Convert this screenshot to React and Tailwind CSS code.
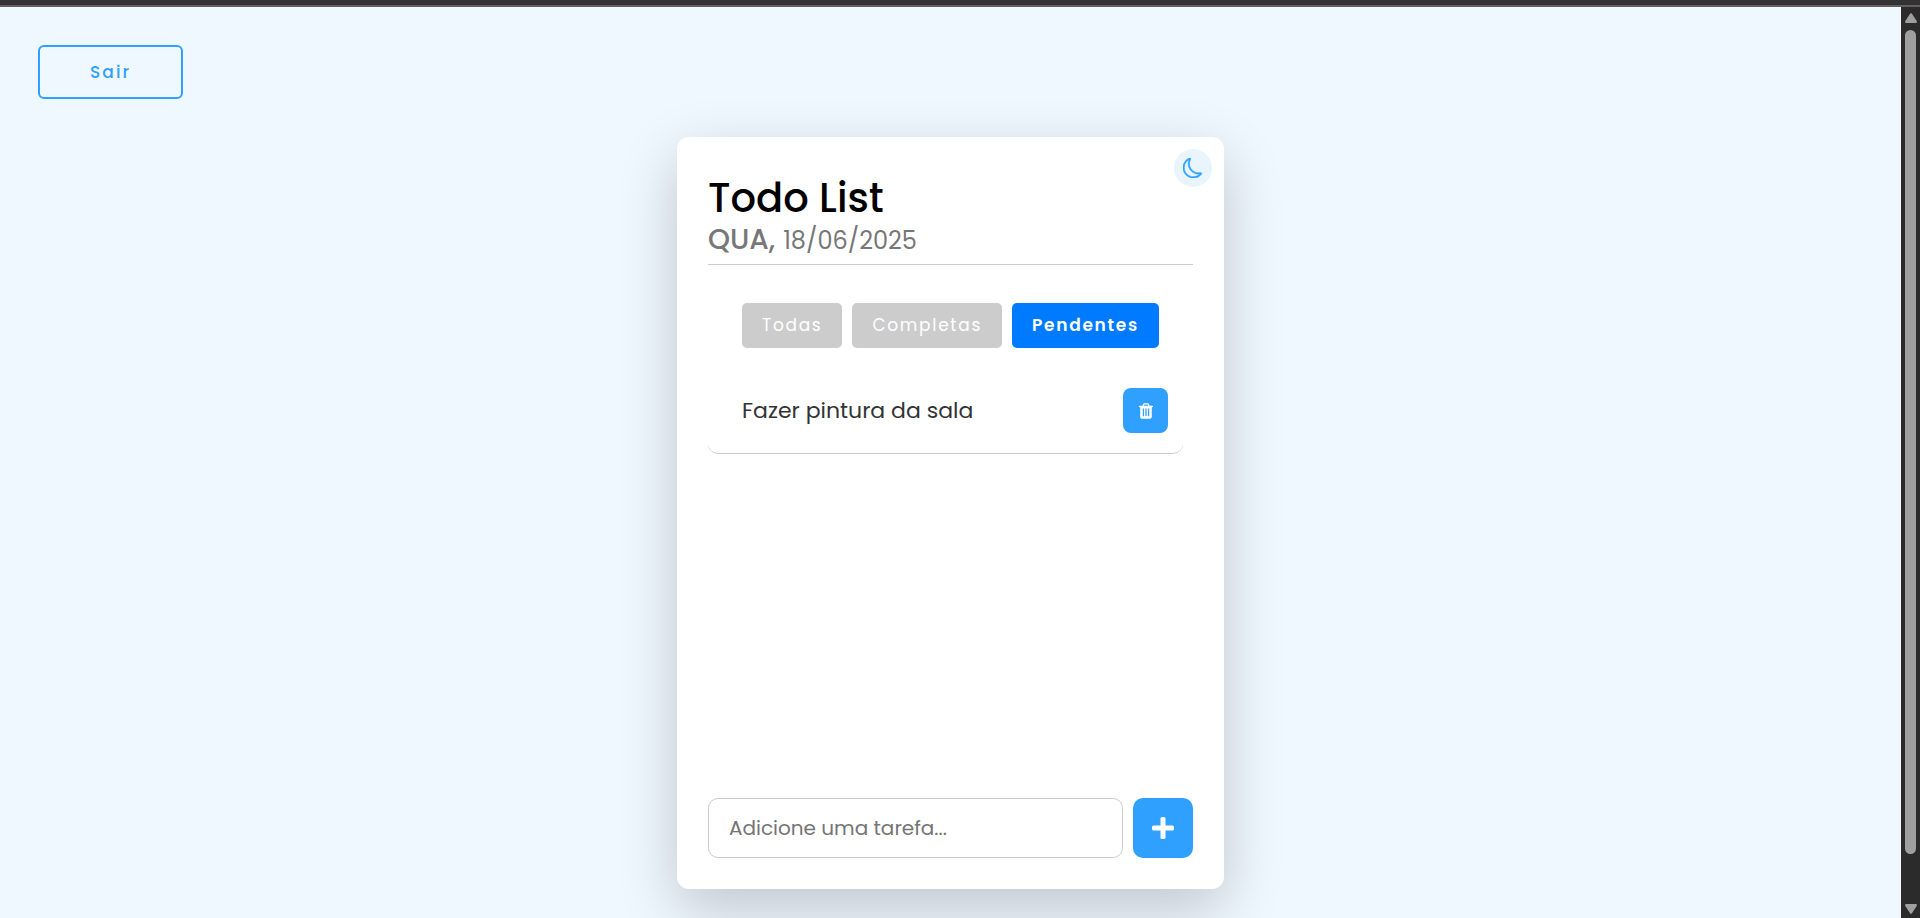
import { useState } from "react";
import { BsMoon } from "react-icons/bs";

const FILTERS = ["Todas", "Completas", "Pendentes"];

function TrashIcon() {
  return (
    <svg viewBox="0 0 1792 1792" className="size-[18px]" fill="currentColor" aria-hidden="true">
      <path d="M704 1376v-704q0-14-9-23t-23-9h-64q-14 0-23 9t-9 23v704q0 14 9 23t23 9h64q14 0 23-9t9-23zm256 0v-704q0-14-9-23t-23-9h-64q-14 0-23 9t-9 23v704q0 14 9 23t23 9h64q14 0 23-9t9-23zm256 0v-704q0-14-9-23t-23-9h-64q-14 0-23 9t-9 23v704q0 14 9 23t23 9h64q14 0 23-9t9-23zm-544-992h448l-48-117q-7-9-17-11h-317q-10 2-17 11zm928 32v64q0 14-9 23t-23 9h-96v948q0 83-47 143.500t-113 60.500h-832q-66 0-113-58.500t-47-141.500v-952h-96q-14 0-23-9t-9-23v-64q0-14 9-23t23-9h309l70-167q15-37 54-63t79-26h320q40 0 79 26t54 63l70 167h309q14 0 23 9t9 23z" />
    </svg>
  );
}

function PlusIcon() {
  return (
    <svg viewBox="0 0 22 22" className="size-[22px]" fill="currentColor" aria-hidden="true">
      <rect x="8.500" y="0" width="5" height="22" rx="1.500" />
      <rect x="0" y="8.500" width="22" height="5" rx="1.500" />
    </svg>
  );
}

function Scrollbar() {
  return (
    <div className="flex w-[19px] shrink-0 flex-col items-center justify-between bg-[#2b2b2b] pt-1.5 pb-1 text-[#9f9f9f]" aria-hidden="true">
      <svg viewBox="0 0 12 10" className="h-2.5 w-3" fill="currentColor">
        <path d="M5.200.6Q6-.3 6.800.6L11.700 8Q12.300 9.800 11 10H1Q-.3 9.800.3 8Z" />
      </svg>
      <div className="mt-[7px] mb-[50px] w-[11px] flex-1 rounded-full bg-[#9f9f9f]" />
      <svg viewBox="0 0 12 10" className="h-2.5 w-3" fill="currentColor">
        <path d="M5.200 9.400Q6 10.300 6.800 9.400L11.700 2Q12.300.2 11 0H1Q-.3.2.3 2Z" />
      </svg>
    </div>
  );
}

function TodoCard() {
  const [active, setActive] = useState("Pendentes");
  const [text, setText] = useState("");

  return (
    <section className="relative flex min-h-[752px] w-full max-w-[547px] flex-col rounded-xl bg-white px-[31px] pt-9 pb-[31px] shadow-[0_20px_60px_rgba(0,0,0,0.2)]">
      <button
        type="button"
        aria-label="Alternar tema"
        className="absolute top-3 right-3 flex size-[38px] items-center justify-center rounded-full bg-[#e8f5ff] text-[#30a0ff]"
      >
        <BsMoon className="size-5 stroke-current stroke-[0.5px]" />
      </button>

      <header className="border-b border-[#cccccc] pb-2">
        <h1 className="text-[40px] leading-[51px] font-medium text-black">Todo List</h1>
        <p className="flex items-baseline gap-2 text-[#777777]">
          <span className="text-[28px] leading-[31px] font-medium">QUA,</span>
          <time dateTime="2025-06-18" className="text-2xl leading-[31px]">18/06/2025</time>
        </p>
      </header>

      <div className="mt-[38px] flex justify-center gap-2.5">
        {FILTERS.map((name) => (
          <button
            key={name}
            type="button"
            aria-pressed={active === name}
            onClick={() => setActive(name)}
            className={`h-[45px] rounded-[5px] px-5 text-[17px] tracking-widest text-white ${
              active === name ? "bg-[#007bff] font-semibold" : "bg-[#cccccc]"
            }`}
          >
            {name}
          </button>
        ))}
      </div>

      <ul className="mt-5 mr-2.5 flex-1">
        <li className="flex items-center justify-between rounded-[10px] border-b border-[#cccccc] py-5 pr-[15px] pl-[34px]">
          <span className="text-[22px] text-[#333333]">Fazer pintura da sala</span>
          <button
            type="button"
            aria-label="Excluir tarefa"
            className="flex size-[45px] items-center justify-center rounded-lg bg-[#30a0ff] text-white"
          >
            <TrashIcon />
          </button>
        </li>
      </ul>

      <form className="flex gap-2.5" onSubmit={(event) => event.preventDefault()}>
        <input
          type="text"
          aria-label="Nova tarefa"
          placeholder="Adicione uma tarefa..."
          value={text}
          onChange={(event) => setText(event.target.value)}
          className="h-[60px] min-w-0 flex-1 rounded-[10px] border border-[#cccccc] px-5 text-xl text-[#333333] outline-none placeholder:text-[#757575]"
        />
        <button
          type="submit"
          aria-label="Adicionar tarefa"
          className="flex size-[60px] items-center justify-center rounded-[10px] bg-[#30a0ff] text-white"
        >
          <PlusIcon />
        </button>
      </form>
    </section>
  );
}

export default function App() {
  return (
    <div className="flex h-screen flex-col overflow-hidden bg-[#eff7ff] font-['Poppins',Inter,sans-serif]">
      <div className="h-[7px] shrink-0 border-b-2 border-[#655f5f] bg-[#333333]" />
      <div className="flex min-h-0 flex-1">
        <main className="flex min-w-0 flex-1 flex-col overflow-hidden pt-[38px]">
          <div className="px-[38px]">
            <button
              type="button"
              className="h-[54px] w-[145px] rounded-md border-2 border-[#30a0ff] text-[17px] leading-[26px] font-medium tracking-[2px] text-[#30a0ff]"
            >
              Sair
            </button>
          </div>
          <div className="mt-[38px] flex justify-center">
            <TodoCard />
          </div>
        </main>
        <Scrollbar />
      </div>
    </div>
  );
}
